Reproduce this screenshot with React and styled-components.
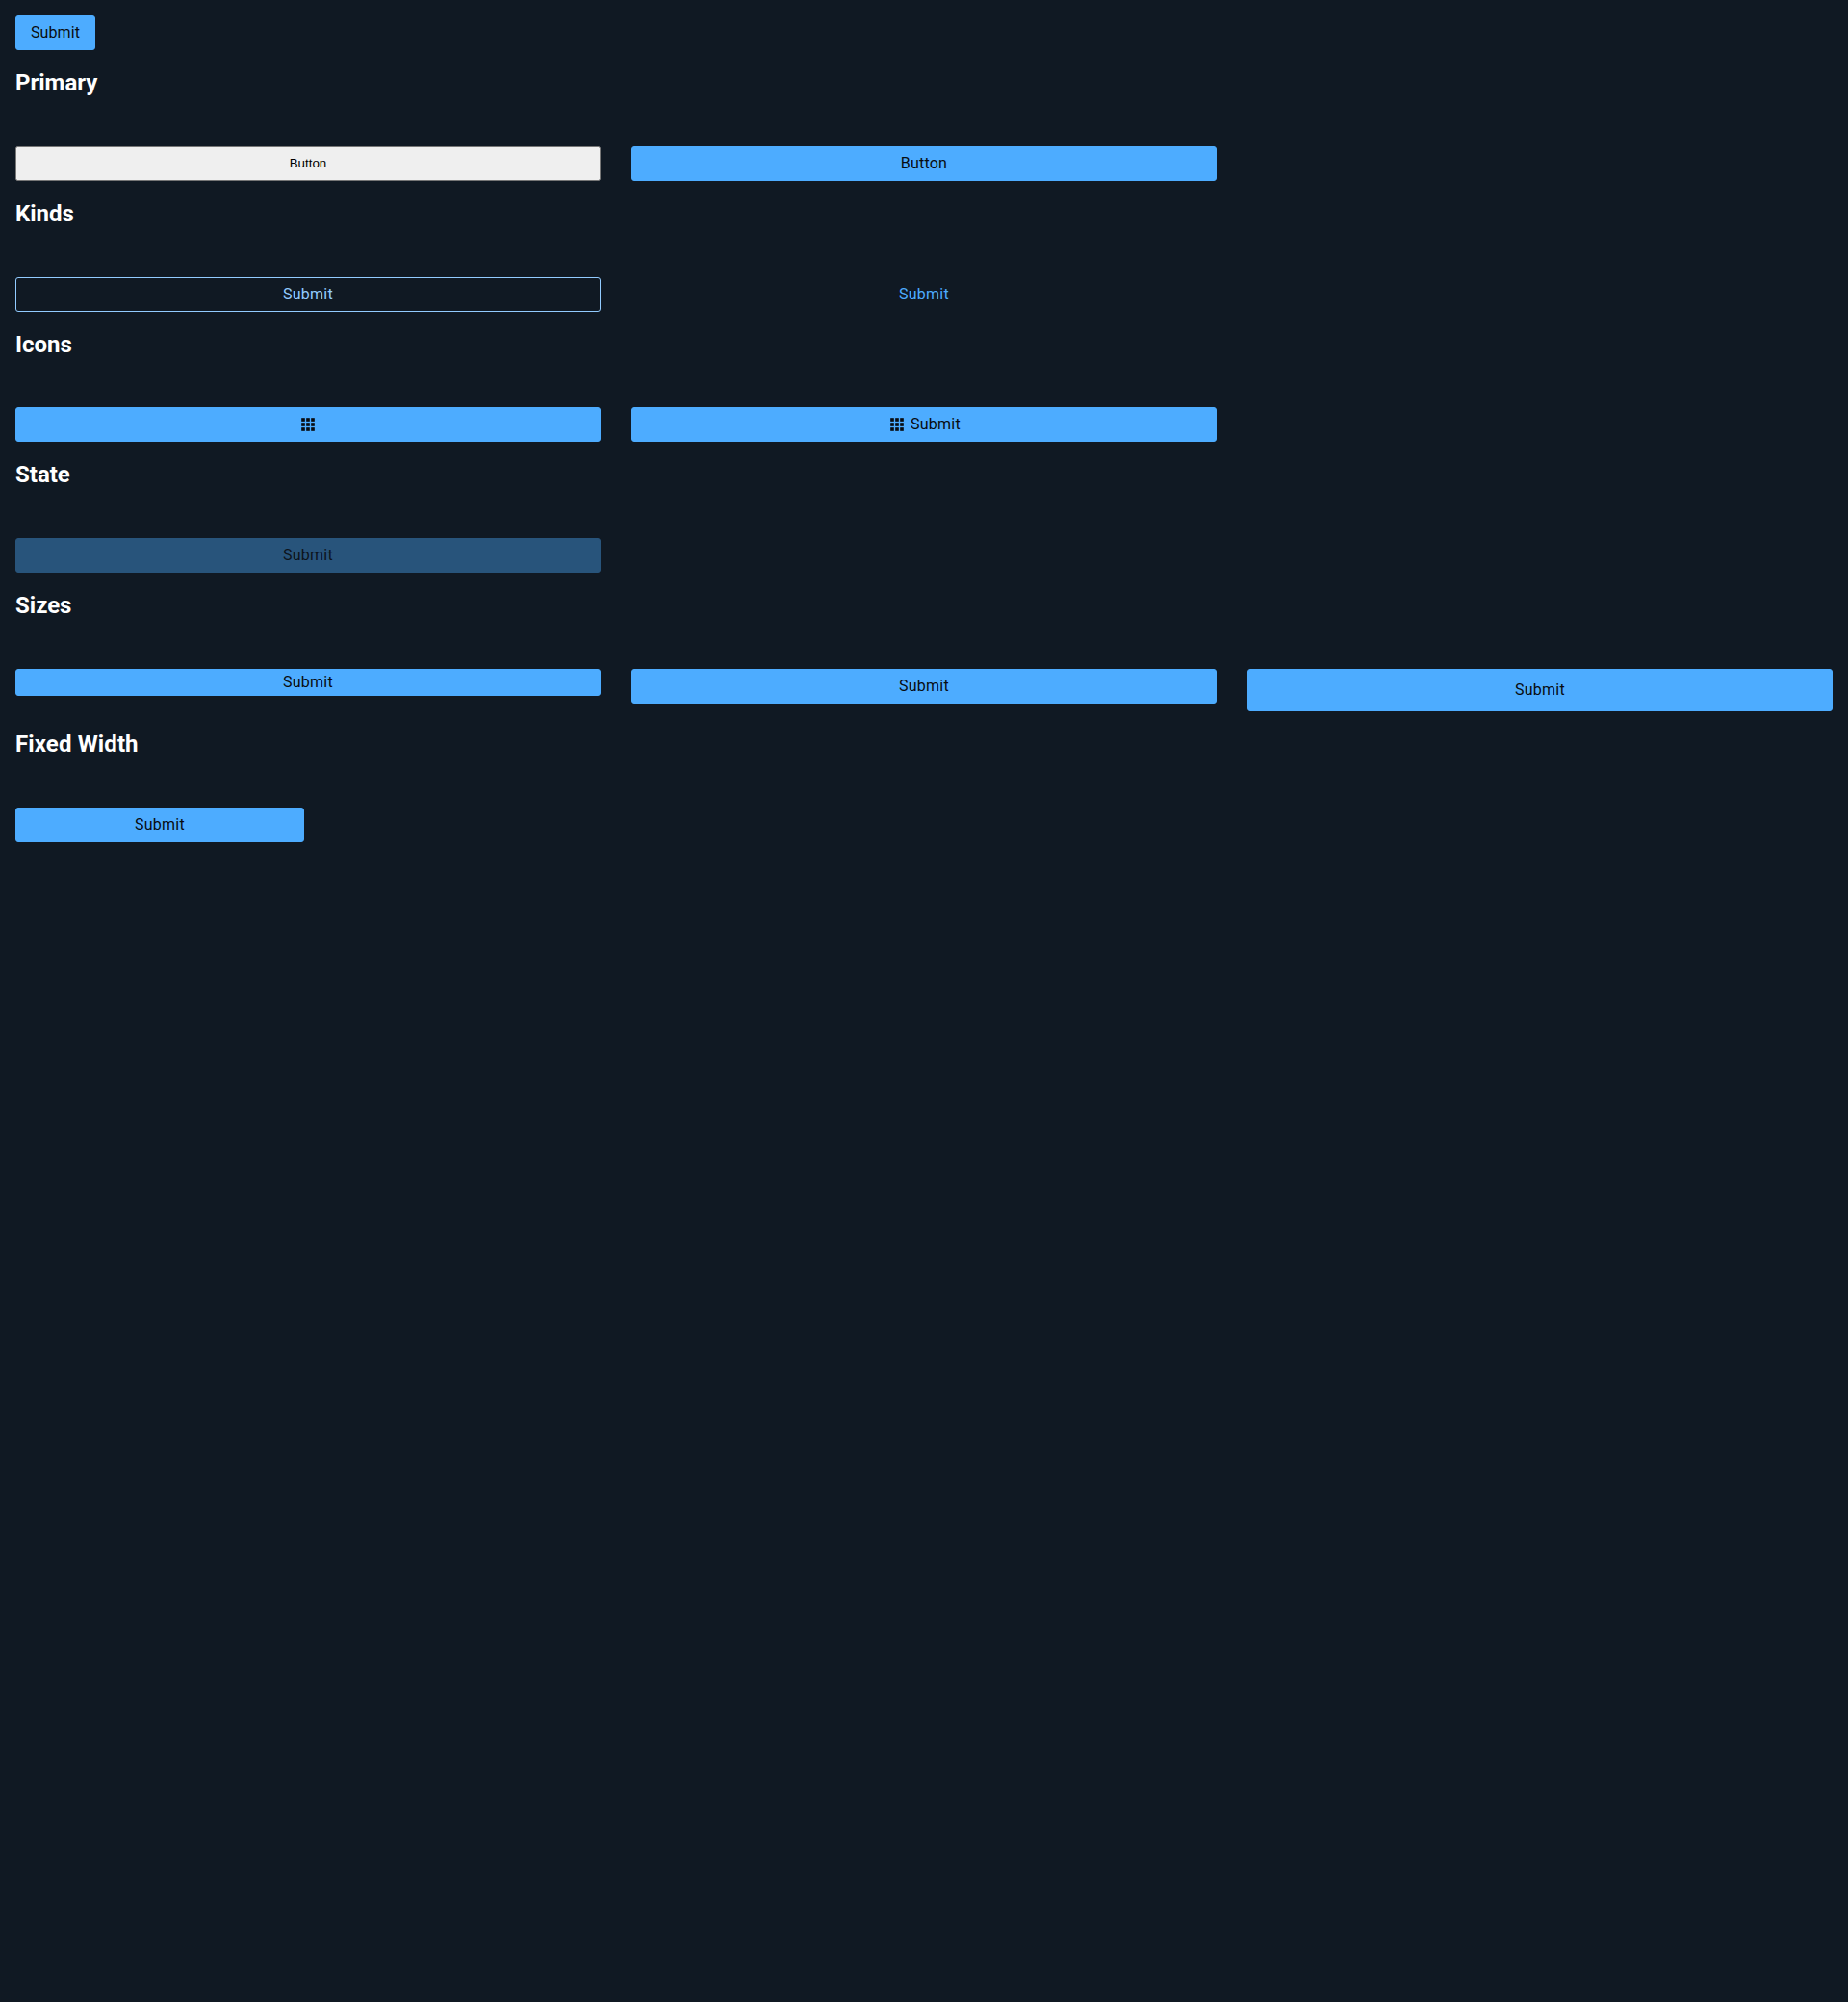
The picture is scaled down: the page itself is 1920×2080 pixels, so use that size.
import React from "react";
import styled, { createGlobalStyle, css } from "styled-components";

const GlobalStyle = createGlobalStyle`
  * { box-sizing: border-box; }
  html, body { margin: 0; padding: 0; background: #101923; }
  body { font-family: Roboto, "Liberation Sans", sans-serif; color: #fff; }
`;

const Page = styled.main`
  padding: 16px;
`;

const Heading = styled.h2`
  margin: 0.83em 0;
  font-size: 24px;
  line-height: 28px;
  font-weight: 700;
  letter-spacing: ${({ $tracking }) => $tracking || "0"};
`;

const Grid = styled.div`
  display: grid;
  grid-template-columns: repeat(3, 1fr);
  align-items: start;
  gap: 32px;
  padding-top: 32px;
`;

const heights = { small: "28px", medium: "36px", large: "44px" };

const kinds = {
  primary: css`
    background: #4dacff;
    border-color: #4dacff;
    color: #080c11;
  `,
  secondary: css`
    background: transparent;
    border-color: #92cbff;
    color: #92cbff;
  `,
  borderless: css`
    background: transparent;
    border-color: transparent;
    color: #4dacff;
  `,
};

const Button = styled.button`
  display: inline-flex;
  align-items: center;
  justify-content: center;
  width: ${({ $width }) => $width || "auto"};
  height: ${({ $size }) => heights[$size || "medium"]};
  padding: 0 15px;
  border: 1px solid;
  border-radius: 3px;
  font: 400 16px/20px Roboto, "Liberation Sans", sans-serif;
  letter-spacing: ${({ $tracking }) => $tracking || "0.25px"};
  vertical-align: top;
  ${({ $kind }) => kinds[$kind || "primary"]}
  &:disabled {
    opacity: 0.4;
  }
`;

const NativeButton = styled.button`
  height: 36px;
`;

const Glyph = styled.svg`
  display: block;
  width: 20px;
  height: 20px;
  margin-right: ${({ $leading }) => ($leading ? "4px" : "0")};
  fill: currentColor;
`;

const steps = [3.82, 9.82, 15.82];

function AppsIcon({ leading }) {
  return (
    <Glyph viewBox="0 0 24 24" aria-hidden="true" $leading={leading}>
      {steps.map((y) => steps.map((x) => <rect key={`${x}-${y}`} x={x} y={y} width="4.36" height="4.36" />))}
    </Glyph>
  );
}

export default function App() {
  return (
    <Page>
      <GlobalStyle />
      <Button $tracking="0.08px">Submit</Button>
      <Heading>Primary</Heading>
      <Grid>
        <NativeButton>Button</NativeButton>
        <Button $tracking="0.2px">Button</Button>
      </Grid>
      <Heading>Kinds</Heading>
      <Grid>
        <Button $kind="secondary">Submit</Button>
        <Button $kind="borderless">Submit</Button>
      </Grid>
      <Heading>Icons</Heading>
      <Grid>
        <Button aria-label="Apps"><AppsIcon /></Button>
        <Button><AppsIcon leading />Submit</Button>
      </Grid>
      <Heading>State</Heading>
      <Grid>
        <Button disabled>Submit</Button>
      </Grid>
      <Heading>Sizes</Heading>
      <Grid>
        <Button $size="small">Submit</Button>
        <Button>Submit</Button>
        <Button $size="large">Submit</Button>
      </Grid>
      <Heading $tracking="0.12px">Fixed Width</Heading>
      <Grid>
        <Button $width="300px">Submit</Button>
      </Grid>
    </Page>
  );
}
